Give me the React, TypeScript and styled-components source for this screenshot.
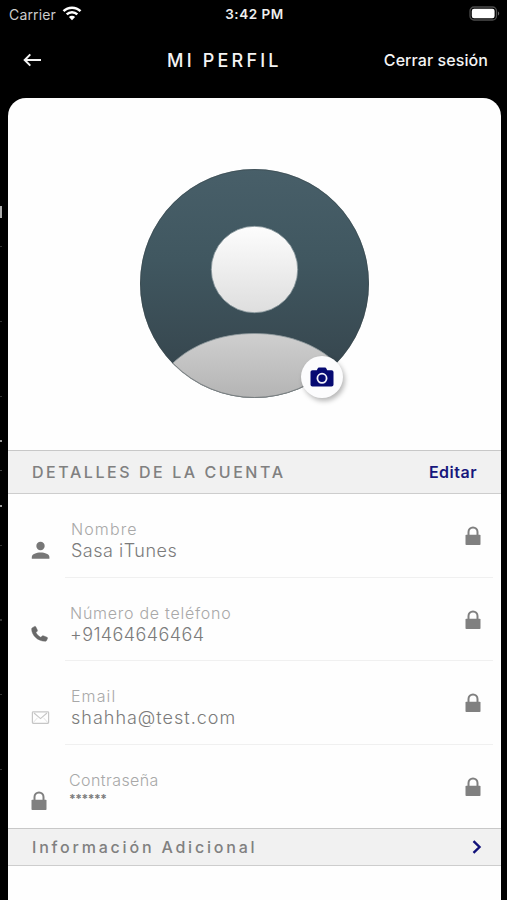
import React from "react";
import styled, { createGlobalStyle } from "styled-components";

const GlobalStyle = createGlobalStyle`
  * { box-sizing: border-box; }
  body { margin: 0; background: #000; font-family: Inter, "Liberation Sans", sans-serif; }
`;

const Screen = styled.div`
  position: relative;
  display: flex;
  flex-direction: column;
  width: 507px;
  height: 900px;
  overflow: hidden;
  background: #000;
`;

const StatusBar = styled.div`
  display: grid;
  grid-template-columns: 1fr auto 1fr;
  align-items: center;
  height: 28px;
  padding: 0 7px 0 9px;
  color: #eee;
`;

const Carrier = styled.div`
  display: flex;
  align-items: center;
  gap: 6px;
  font-size: 14px;
  letter-spacing: 0.15px;
  color: #ccc;
`;

const Clock = styled.div`
  font-size: 13.5px;
  font-weight: 600;
  letter-spacing: 0.55px;
`;

const Battery = styled.svg`
  justify-self: end;
`;

const NavBar = styled.header`
  display: flex;
  align-items: center;
  height: 70px;
  padding: 0 19px 6px 23px;
  color: #f4f4f4;
`;

const BackIcon = styled.svg`
  margin: 0 125px 1px 0;
`;

const Title = styled.h1`
  margin: 0;
  font-size: 18px;
  font-weight: 500;
  letter-spacing: 3.2px;
`;

const Logout = styled.div`
  margin-left: auto;
  font-size: 16px;
  font-weight: 500;
  letter-spacing: 0.08px;
`;

const Card = styled.main`
  flex: 1;
  margin: 0 6px 0 8px;
  border-radius: 18px 18px 0 0;
  background: #fefefe;
  overflow: hidden;
`;

const Hero = styled.section`
  display: flex;
  justify-content: center;
  height: 352px;
  padding-top: 70px;
`;

const AvatarBox = styled.div`
  position: relative;
  width: 230px;
  height: 230px;
`;

const CameraButton = styled.div`
  position: absolute;
  right: 27px;
  bottom: 0;
  display: flex;
  align-items: center;
  justify-content: center;
  width: 42px;
  height: 42px;
  border-radius: 50%;
  background: #fcfcfd;
  box-shadow: 2px 3px 5px rgba(0, 0, 0, 0.28);
`;

const SectionBar = styled.div<{ $height: number }>`
  display: flex;
  align-items: center;
  justify-content: space-between;
  height: ${(p) => p.$height}px;
  padding: 0 24px;
  border-top: 1px solid #c8c8c8;
  border-bottom: 1px solid #cdcdcd;
  background: #f1f1f1;
`;

const SectionTitle = styled.h2<{ $spacing: number }>`
  margin: 0;
  font-size: 16px;
  font-weight: 500;
  letter-spacing: ${(p) => p.$spacing}px;
  color: #808080;
`;

const EditLink = styled.div`
  font-size: 16px;
  font-weight: 600;
  letter-spacing: 0.5px;
  color: #17177c;
`;

const Chevron = styled.svg`
  margin-right: -6px;
`;

const Row = styled.div<{ $last?: boolean }>`
  display: flex;
  height: ${(p) => (p.$last ? 83.2 : 83.6)}px;
  padding: 0 8px 0 22px;
`;

const RowIcon = styled.div<{ $shift: number }>`
  width: 35px;
  height: 70px;
  padding: 46px 0 0 ${(p) => p.$shift}px;
`;

const RowBody = styled.div<{ $indent: number; $last?: boolean }>`
  display: flex;
  flex: 1;
  justify-content: space-between;
  padding: 24px 12px 0 ${(p) => p.$indent}px;
  border-bottom: 1px solid ${(p) => (p.$last ? "transparent" : "#f0f0f0")};
`;

const Label = styled.div<{ $spacing: number }>`
  height: 22px;
  font-size: 16px;
  line-height: 22px;
  font-weight: 300;
  letter-spacing: ${(p) => p.$spacing}px;
  color: #a8a8a8;
`;

const Value = styled.div<{ $spacing: number; $masked?: boolean }>`
  font-size: ${(p) => (p.$masked ? 12 : 18)}px;
  line-height: ${(p) => (p.$masked ? 16 : 22)}px;
  font-weight: ${(p) => (p.$masked ? 700 : 350)};
  letter-spacing: ${(p) => p.$spacing}px;
  color: #7b7b7b;
`;

const LockBox = styled.div`
  padding-top: 8px;
`;

const Underlay = styled.div<{ $top: number; $height: number; $tone: string }>`
  position: absolute;
  left: 0;
  top: ${(p) => p.$top}px;
  width: 2px;
  height: ${(p) => p.$height}px;
  background: ${(p) => p.$tone};
`;

const Lock = () => (
  <svg width="16" height="20" viewBox="0 0 16 20">
    <path d="M3.500 9V5.900a4.500 4.500 0 0 1 9 0V9" fill="none" stroke="#808080" strokeWidth="2" />
    <rect x="0.500" y="8.700" width="15" height="10.300" rx="0.800" fill="#808080" />
  </svg>
);

const Person = () => (
  <svg width="20" height="20" viewBox="0 0 20 20">
    <circle cx="10.500" cy="6" r="4.200" fill="#777" />
    <path d="M1.800 18.800v-1.700c0-3.200 4.600-4.700 8.800-4.700s8.800 1.500 8.800 4.700v1.700z" fill="#777" />
  </svg>
);

const Phone = () => (
  <svg width="20" height="20" viewBox="0 0 20 20">
    <path
      d="M2.400 3.700 4.600 2.400c.5-.2 1 0 1.200.4l1.600 3.300c.2.400.1.900-.2 1.200L6 8.600c1.100 2.100 2.600 3.600 4.800 4.700l1.400-1.300c.3-.3.800-.4 1.200-.2l3.600 1.400c.5.2.7.600.600 1.100l-.9 2c-.2.700-.8 1-1.400 1C7.800 17.300 1.600 11.200 1.600 4.900c0-.500.3-.9.8-1.200z"
      fill="#696969"
      stroke="#696969"
      strokeWidth="0.400"
    />
  </svg>
);

const Mail = () => (
  <svg width="20" height="20" viewBox="0 0 20 20" fill="none" stroke="#c6c6c6" strokeWidth="1.200">
    <rect x="2.400" y="4.800" width="16.200" height="11.600" rx="0.800" />
    <path d="m4 6 6.500 5.600L17 6" strokeWidth="1.100" />
    <path d="m3 15.800 4.500-5M18 15.800l-4.500-5" strokeWidth="0.500" />
  </svg>
);

const Avatar = () => (
  <svg width="230" height="230" viewBox="0 0 230 230">
    <defs>
      <linearGradient id="ground" x1="0" y1="0" x2="0" y2="1">
        <stop offset="0" stopColor="#485f69" />
        <stop offset="0.4" stopColor="#405760" />
        <stop offset="0.85" stopColor="#37474f" />
      </linearGradient>
      <linearGradient id="head" x1="0" y1="0" x2="0" y2="1">
        <stop offset="0" stopColor="#fdfdfd" />
        <stop offset="1" stopColor="#dedede" />
      </linearGradient>
      <linearGradient id="shoulders" x1="0" y1="0" x2="0" y2="1">
        <stop offset="0" stopColor="#cfcfcf" />
        <stop offset="1" stopColor="#b3b3b3" />
      </linearGradient>
      <clipPath id="disc">
        <circle cx="114.500" cy="115.500" r="114.500" />
      </clipPath>
    </defs>
    <g clipPath="url(#disc)">
      <rect width="230" height="230" fill="url(#ground)" />
      <path
        d="M28 200C48 178 79 165.500 114.500 165.500S181 178 201 200v32H28z"
        fill="url(#shoulders)"
        stroke="#8d989c"
        strokeWidth="0.800"
      />
    </g>
    <circle cx="114.500" cy="101.500" r="43.200" fill="url(#head)" stroke="#87959a" strokeWidth="0.800" />
    <circle cx="114.500" cy="115.500" r="114" fill="none" stroke="#3c474b" strokeOpacity="0.500" />
  </svg>
);

const Camera = () => (
  <svg width="24" height="20" viewBox="0 0 24 20">
    <path
      d="M2.500 3.200h4.300l1-1.900c.2-.5.6-.7 1.100-.7h6.200c.5 0 .9.200 1.100.7l1 1.900h4.300c1.200 0 2 .8 2 2v12.400c0 1.200-.8 2-2 2h-19c-1.200 0-2-.8-2-2V5.200c0-1.200.8-2 2-2z"
      fill="#060a72"
    />
    <circle cx="12" cy="11.300" r="4.600" fill="none" stroke="#f4f4fa" strokeWidth="1.800" />
  </svg>
);

const rows = [
  { icon: <Person />, label: "Nombre", value: "Sasa iTunes", indent: 6, shift: 0, ls: 1.1, vs: 0.5 },
  { icon: <Phone />, label: "Número de teléfono", value: "+91464646464", indent: 5, shift: 0, ls: 0.74, vs: 0.4 },
  { icon: <Mail />, label: "Email", value: "shahha@test.com", indent: 6, shift: 0, ls: 1.1, vs: 1 },
  { icon: <Lock />, label: "Contraseña", value: "******", indent: 4, shift: 1, ls: 0.42, vs: -0.45 },
];

const marks = [
  { top: 206, height: 12, tone: "#aaa" },
  { top: 246, height: 1, tone: "#333" },
  { top: 321, height: 1, tone: "#333" },
  { top: 396, height: 1, tone: "#333" },
  { top: 440, height: 2, tone: "#999" },
  { top: 470, height: 1, tone: "#444" },
  { top: 505, height: 2, tone: "#999" },
  { top: 545, height: 1, tone: "#333" },
  { top: 619, height: 2, tone: "#333" },
  { top: 694, height: 1, tone: "#333" },
  { top: 769, height: 1, tone: "#333" },
];

export default function App() {
  return (
    <>
      <GlobalStyle />
      <Screen>
        <StatusBar>
          <Carrier>
            Carrier
            <svg width="20" height="17" viewBox="0 0 20 17" fill="none" stroke="#fff" strokeWidth="2.500">
              <path d="M1.500 5.200a12 12 0 0 1 17 0" />
              <path d="M4.700 8.400a7.500 7.500 0 0 1 10.600 0" />
              <path d="M10 14.200 6.900 11.100a4.400 4.400 0 0 1 6.200 0z" fill="#fff" stroke="none" />
            </svg>
          </Carrier>
          <Clock>3:42 PM</Clock>
          <Battery width="31" height="17" viewBox="0 0 31 17">
            <rect x="1" y="1" width="26.500" height="13" rx="4" fill="none" stroke="#4c4c4c" strokeWidth="1.300" />
            <rect x="2.800" y="2.800" width="22.800" height="9.400" rx="2.200" fill="#fff" />
            <path d="M29 5.500c1.600.6 1.600 3.400 0 4z" fill="#666" />
          </Battery>
        </StatusBar>
        <NavBar>
          <BackIcon width="19" height="14" viewBox="0 0 19 14" fill="none" stroke="#f4f4f4" strokeWidth="2">
            <path d="M18 7H2M7.300 1.400 1.700 7l5.600 5.600" />
          </BackIcon>
          <Title>MI PERFIL</Title>
          <Logout>Cerrar sesión</Logout>
        </NavBar>
        <Card>
          <Hero>
            <AvatarBox>
              <Avatar />
              <CameraButton>
                <Camera />
              </CameraButton>
            </AvatarBox>
          </Hero>
          <SectionBar $height={44}>
            <SectionTitle $spacing={2.56}>DETALLES DE LA CUENTA</SectionTitle>
            <EditLink>Editar</EditLink>
          </SectionBar>
          {rows.map((r, i) => {
            const last = i === rows.length - 1;
            return (
              <Row key={r.label} $last={last}>
                <RowIcon $shift={r.shift}>{r.icon}</RowIcon>
                <RowBody $indent={r.indent} $last={last}>
                  <div>
                    <Label $spacing={r.ls}>{r.label}</Label>
                    <Value $spacing={r.vs} $masked={last}>
                      {r.value}
                    </Value>
                  </div>
                  <LockBox>
                    <Lock />
                  </LockBox>
                </RowBody>
              </Row>
            );
          })}
          <SectionBar $height={38}>
            <SectionTitle $spacing={2.8}>Información Adicional</SectionTitle>
            <Chevron width="12" height="14" viewBox="0 0 12 14" fill="none" stroke="#11117a" strokeWidth="2.400">
              <path d="m2.500 1.200 6 5.800-6 5.800" />
            </Chevron>
          </SectionBar>
        </Card>
        {marks.map((m) => (
          <Underlay key={m.top} $top={m.top} $height={m.height} $tone={m.tone} />
        ))}
      </Screen>
    </>
  );
}
